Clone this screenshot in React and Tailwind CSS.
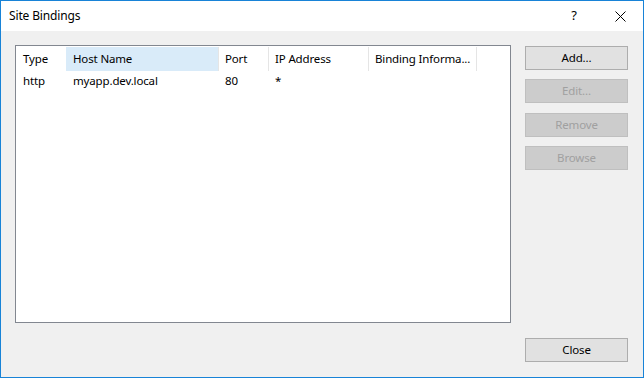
export default function App() {
  const font = { fontFamily: '"Noto Sans", "Open Sans", sans-serif' };
  const cols = [
    { label: "Type", w: "w-[50px]", hover: false, sep: false },
    { label: "Host Name", w: "w-[152px]", hover: true, sep: false },
    { label: "Port", w: "w-[50px]", hover: false, sep: true },
    { label: "IP Address", w: "w-[100px]", hover: false, sep: true },
    { label: "Binding Informa...", w: "w-[108px]", hover: false, sep: true },
  ];
  const row = ["http", "myapp.dev.local", "80", "*", ""];
  return (
    <div
      className="w-[644px] h-[378px] border border-[#1883d7] flex flex-col bg-white text-[11.5px] tracking-[-0.15px] text-black"
      style={font}
    >
      <div className="h-[30px] flex items-center bg-white shrink-0">
        <span className="pl-[8px] flex-1 text-[12px]">Site Bindings</span>
        <div className="w-[46px] h-[30px] flex items-center justify-center text-[13px]">?</div>
        <div className="w-[46px] h-[30px] flex items-center justify-center">
          <svg width="11" height="11" viewBox="0 0 11 11">
            <path d="M0.5 0.5 L10.5 10.5 M10.5 0.5 L0.5 10.5" stroke="#000" strokeWidth="1" />
          </svg>
        </div>
      </div>
      <div className="flex-1 bg-[#f0f0f0] flex pt-[14px] pl-[14px] pr-[15px] pb-[15px]">
        <div className="w-[496px] h-[278px] border border-[#828790] bg-white flex flex-col">
          <div className="flex h-[25px] pt-[1px]">
            {cols.map((c, i) => (
              <div
                key={i}
                className={`${c.w} flex items-center pl-[7px] relative ${c.hover ? "bg-[#d9ebf9]" : ""}`}
              >
                {c.sep && (
                  <div className="absolute left-0 top-0 bottom-0 w-px bg-[#e5e5e5]" />
                )}
                <span className="whitespace-nowrap">{c.label}</span>
              </div>
            ))}
            <div className="w-px bg-[#e5e5e5]" />
          </div>
          <div className="flex h-[19px]">
            {cols.map((c, i) => (
              <div key={i} className={`${c.w} flex items-center pl-[7px]`}>
                <span className="whitespace-nowrap">{row[i]}</span>
              </div>
            ))}
          </div>
        </div>
        <div className="flex flex-col ml-[14px] w-[103px] pt-[1px]">
          <button className="h-[24px] w-[103px] bg-[#e1e1e1] border border-[#adadad] text-black">
            Add...
          </button>
          <button className="mt-[9px] h-[24px] w-[103px] bg-[#cccccc] border border-[#bfbfbf] text-[#a0a0a0]">
            Edit...
          </button>
          <button className="mt-[10px] h-[24px] w-[103px] bg-[#cccccc] border border-[#bfbfbf] text-[#a0a0a0]">
            Remove
          </button>
          <button className="mt-[9px] h-[24px] w-[103px] bg-[#cccccc] border border-[#bfbfbf] text-[#a0a0a0]">
            Browse
          </button>
          <button className="mt-auto h-[24px] w-[103px] bg-[#e1e1e1] border border-[#adadad] text-black">
            Close
          </button>
        </div>
      </div>
    </div>
  );
}
